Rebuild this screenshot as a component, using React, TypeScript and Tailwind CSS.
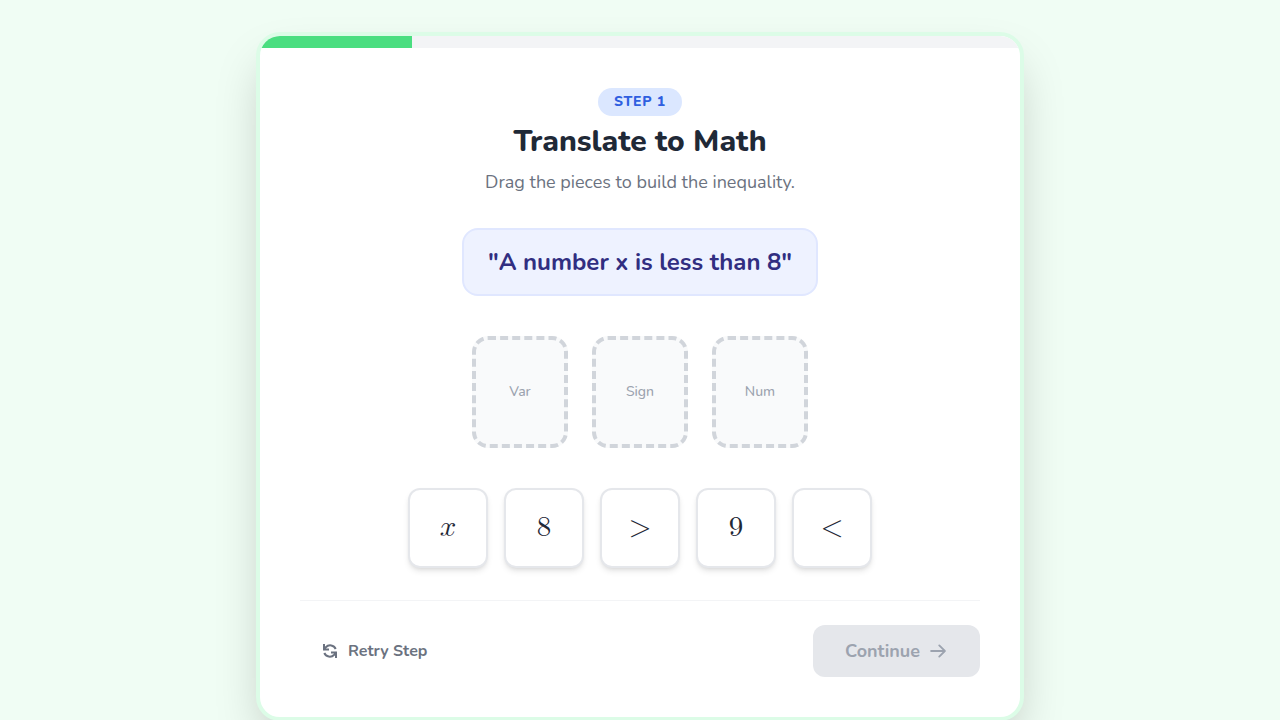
import { PiArrowRightBold } from "react-icons/pi";

const slots = ['Var', 'Sign', 'Num'];

const pieces = ['𝑥', '8', '>', '9', '<'];

const RetryIcon = () => (
    <svg className="size-5" viewBox="0 0 20 20" fill="none" stroke="currentColor" strokeWidth="2" aria-hidden="true">
        <path d="M4 3v5.5h5" />
        <path d="M4 8.5l1.8-2.2a6 6 0 0 1 9.9 1.7" />
        <path d="M16 17v-5.5h-5" />
        <path d="M16 11.5l-1.8 2.2a6 6 0 0 1-9.9-1.7" />
    </svg>
);

const ProgressBar = ({ percent }: { percent: number }) => (
    <div className="h-3 w-full bg-gray-100" role="progressbar" aria-label="Lesson progress" aria-valuenow={percent}>
        <div className="h-full bg-[#4ade80]" style={{ width: `${percent}%` }} />
    </div>
);

const App = () => {
    return (
        <div className="flex min-h-screen items-start justify-center bg-[#f0fdf4] p-8 font-['Nunito','Lato',sans-serif]">
            <main className="w-full max-w-3xl overflow-hidden rounded-3xl border-4 border-[#dcfce7] bg-white shadow-2xl">
                <ProgressBar percent={20} />

                <div className="flex flex-col p-10">
                    <header className="flex flex-col items-center text-center">
                        <span className="rounded-full bg-[#dbe7ff] px-4 py-1 text-sm leading-5 font-extrabold tracking-wider text-[#2f5fe0]">
                            STEP 1
                        </span>
                        <h1 className="mt-2 text-3xl leading-9 font-extrabold text-[#1f2937]">
                            Translate to Math
                        </h1>
                        <p className="mt-2 text-lg leading-7 text-[#6b7280]">
                            Drag the pieces to build the inequality.
                        </p>
                    </header>

                    <div className="mt-8 self-center rounded-2xl border-2 border-[#e0e7ff] bg-[#eef2ff] px-6 py-4 text-center text-2xl leading-8 font-bold text-[#312e81]">
                        "A number x is less than 8"
                    </div>

                    <div className="mt-10 flex justify-center gap-6">
                        {slots.map((slot) => (
                            <div
                                key={slot}
                                className="flex h-28 w-24 items-center justify-center rounded-2xl border-4 border-dashed border-[#d1d5db] bg-[#f9fafb] text-sm font-medium text-[#9ca3af]"
                            >
                                {slot}
                            </div>
                        ))}
                    </div>

                    <div className="mt-10 flex flex-wrap justify-center gap-4 font-['Latin_Modern_Math','Liberation_Serif',serif]">
                        {pieces.map((piece) => (
                            <button
                                key={piece}
                                type="button"
                                className="flex size-20 cursor-grab items-center justify-center rounded-xl border-2 border-[#e5e7eb] bg-white text-[29px] leading-9 text-[#1f2937] shadow-md"
                            >
                                {piece}
                            </button>
                        ))}
                    </div>

                    <footer className="mt-8 flex items-center justify-between border-t border-[#f3f4f6] pt-6">
                        <button type="button" className="flex items-center gap-2 px-5 py-3 font-bold text-[#6b7280]">
                            <RetryIcon />
                            Retry Step
                        </button>
                        <button
                            type="button"
                            disabled
                            className="flex items-center gap-2 rounded-xl bg-[#e5e7eb] px-8 py-3 text-lg leading-7 font-bold text-[#9ca3af]"
                        >
                            Continue
                            <PiArrowRightBold className="size-5" />
                        </button>
                    </footer>
                </div>
            </main>
        </div>
    );
};

export default App;
